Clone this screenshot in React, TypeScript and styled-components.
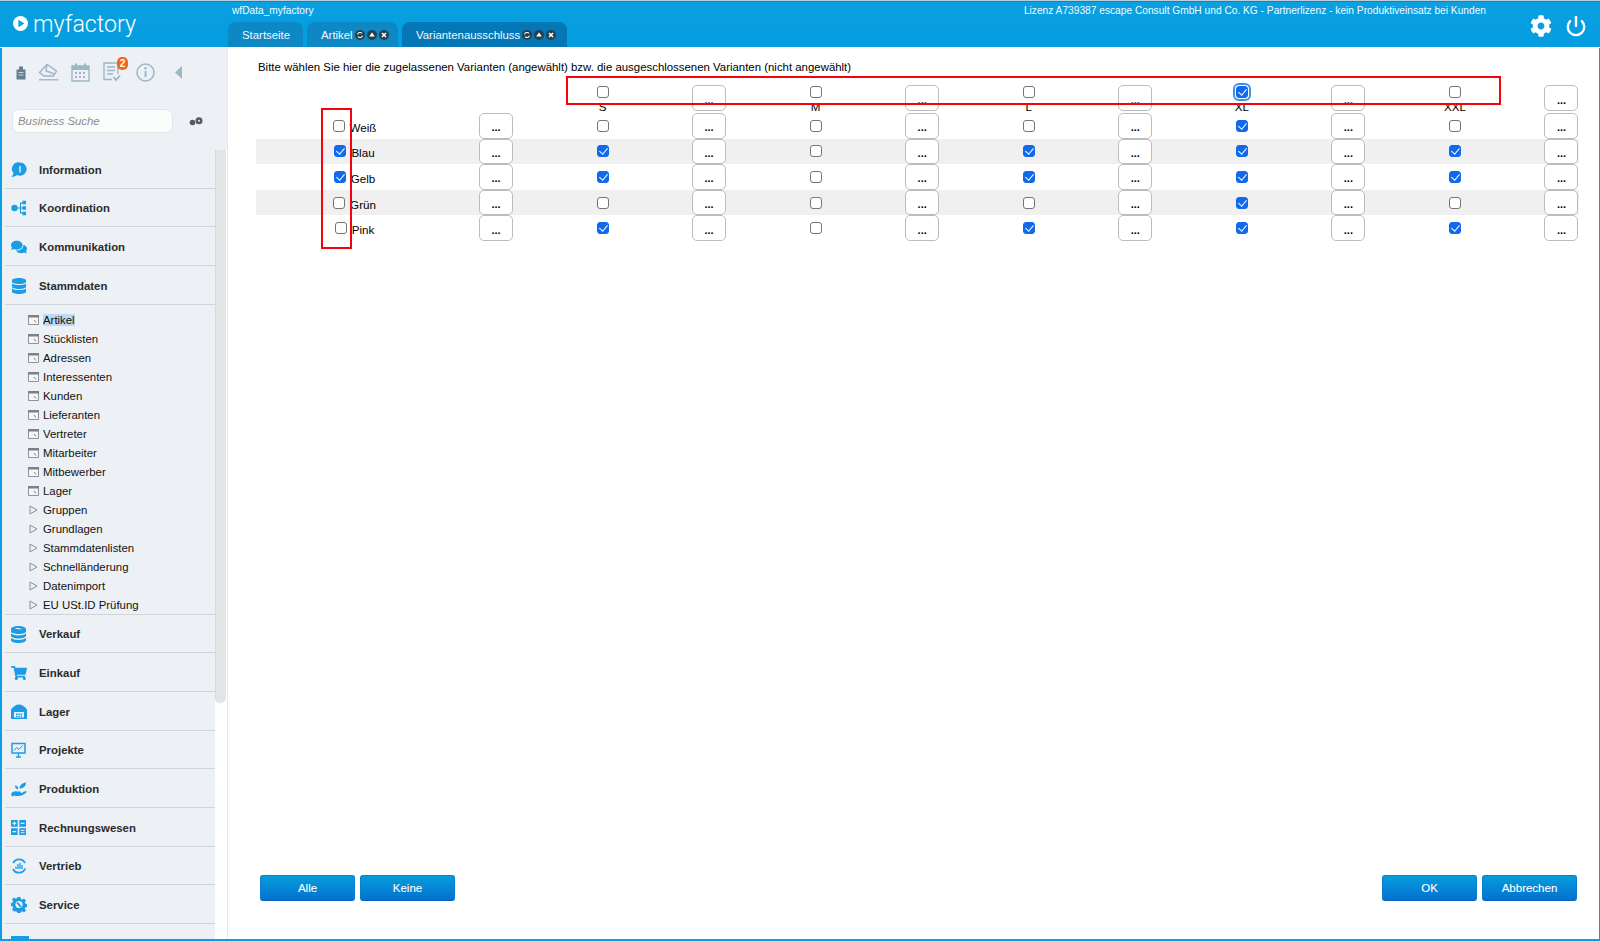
import React from "react";
import styled, { createGlobalStyle } from "styled-components";
import { FaCog, FaComments, FaDatabase, FaShoppingCart } from "react-icons/fa";
import { Power } from "lucide-react";

const GlobalStyle = createGlobalStyle`
  html, body { margin: 0; padding: 0; background: #fff; }
  body { font-family: "Liberation Sans", Arial, sans-serif; font-size: 12px; color: #000; }
  * { box-sizing: border-box; }
`;

const Page = styled.div`
  width: 1600px;
  height: 941px;
  display: flex;
  flex-direction: column;
  overflow: hidden;
`;

const Header = styled.header`
  height: 47px;
  flex: none;
  display: flex;
  padding-top: 2px;
  color: #fff;
  background: linear-gradient(#b9cfdb 0 1px, #3e7590 1px 2px, #0aa0e2 2px, #049ddf 100%);
`;

const Logo = styled.div`
  width: 228px;
  flex: none;
  display: flex;
  align-items: center;
  gap: 5px;
  padding: 0 0 2px 13px;
  font-family: Roboto, sans-serif;
  font-weight: 300;
  font-size: 23.2px;
`;

const HeaderMiddle = styled.div`
  flex: 1;
  display: flex;
  flex-direction: column;
`;

const InfoLine = styled.div`
  height: 20px;
  display: flex;
  justify-content: space-between;
  align-items: center;
  padding: 0 0 4px 4px;
  font-size: 10.2px;
  color: #f2fbff;
`;

const TabStrip = styled.nav`
  display: flex;
  gap: 4px;
  height: 25px;
`;

const Tab = styled.div<{ $active?: boolean; $width: number }>`
  width: ${(p) => p.$width}px;
  display: flex;
  align-items: center;
  gap: 2px;
  padding-left: 14px;
  font-size: 11.4px;
  border-radius: 8px 8px 0 0;
  color: #eef9ff;
  background: ${(p) => (p.$active ? "#0577b6" : "#0d88c4")};
`;

const TabGlyphs = styled.span`
  display: inline-flex;
  gap: 2px;
`;

const HeaderIcons = styled.div`
  width: 114px;
  flex: none;
  display: flex;
  align-items: center;
  gap: 13px;
  padding: 3px 0 0 44px;
`;

const Body = styled.div`
  flex: 1;
  display: flex;
  min-height: 0;
  margin-top: 1px;
  border-left: 2px solid #0a9fe2;
  border-right: 1px solid #0a9fe2;
  border-bottom: 2px solid #0a9fe2;
`;

const Sidebar = styled.aside`
  width: 226px;
  flex: none;
  display: flex;
  flex-direction: column;
  border-right: 1px solid #e3e9ee;
`;

const SideTop = styled.div`
  height: 102px;
  flex: none;
  background: #edf1f5;
  padding-top: 12px;
`;

const ToolRow = styled.div`
  height: 24px;
  display: flex;
  align-items: center;
  padding-left: 6px;
`;

const ToolSlot = styled.span<{ $width: number }>`
  position: relative;
  width: ${(p) => p.$width}px;
  display: flex;
  justify-content: center;
  color: #9ab8c6;
`;

const Badge = styled.span`
  position: absolute;
  top: -5px;
  left: 19px;
  width: 11px;
  height: 13px;
  border-radius: 5px;
  background: #f4661b;
  color: #fff;
  font-size: 10px;
  font-weight: 700;
  line-height: 13px;
  text-align: center;
`;

const SearchRow = styled.div`
  display: flex;
  align-items: center;
  gap: 16px;
  margin-top: 25px;
  padding-left: 10px;
`;

const SearchInput = styled.input`
  width: 161px;
  height: 24px;
  padding: 0 5px;
  border: 1px solid #e0e5e9;
  border-radius: 7px;
  background: #fbfcfc;
  font: italic 11.4px "Liberation Sans", Arial, sans-serif;
  outline: none;
  &::placeholder { color: #8d8d8d; opacity: 1; }
`;

const SideBody = styled.div`
  flex: 1;
  display: flex;
  min-height: 0;
`;

const Nav = styled.div`
  width: 213px;
  flex: none;
  overflow: hidden;
  background: #edf1f5;
`;

const Section = styled.div`
  height: 38.67px;
  margin-left: 3px;
  display: flex;
  align-items: center;
  border-bottom: 1px solid #cfd6db;
  padding: 2px 0 0 6px;
  font-size: 11.4px;
  font-weight: 700;
  color: #2b2b2b;
`;

const SectionIcon = styled.span`
  width: 28px;
  flex: none;
  display: flex;
  color: #1b9ce6;
`;

const SubList = styled.div`
  height: 310px;
  margin-left: 3px;
  padding: 6px 0 0 23px;
  border-bottom: 1px solid #cfd6db;
`;

const SubItem = styled.div`
  height: 19px;
  display: flex;
  align-items: center;
  gap: 4px;
  font-size: 11.4px;
  color: #111;
`;

const SubMark = styled.span`
  width: 11px;
  flex: none;
  display: flex;
  justify-content: center;
`;

const SubLabel = styled.span<{ $selected?: boolean }>`
  background: ${(p) => (p.$selected ? "#bcd9f6" : "transparent")};
`;

const ScrollTrack = styled.div`
  width: 11px;
  flex: none;
  background: #fff;
`;

const ScrollThumb = styled.div`
  height: 553px;
  border-radius: 0 0 5px 5px;
  background: #e4e5e6;
  box-shadow: inset 1px 0 1px #d9d9d9;
`;

const Main = styled.main`
  position: relative;
  flex: 1;
  display: flex;
  flex-direction: column;
  padding: 12px 22px 38px 28px;
`;

const Intro = styled.div`
  height: 15px;
  padding-left: 2px;
  line-height: 15px;
  font-size: 11.42px;
`;

const Matrix = styled.div`
  margin-top: 10px;
  width: 1323px;
`;

const Row = styled.div<{ $head?: boolean; $shaded?: boolean }>`
  display: grid;
  grid-template-columns: 223px 34px repeat(5, 179.1px 34px);
  grid-template-rows: ${(p) => (p.$head ? "26px" : "25.6px")};
  height: ${(p) => (p.$head ? "28px" : "25.6px")};
  background: ${(p) => (p.$shaded ? "#f0f0f0" : "transparent")};
`;

const NameCell = styled.label`
  display: flex;
  align-items: center;
  justify-content: center;
  gap: 5px;
  padding-right: 26px;
`;

const NameText = styled.span`
  position: relative;
  top: 1.5px;
  font-size: 11.6px;
`;

const CheckCell = styled.div`
  display: flex;
  align-items: center;
  justify-content: center;
`;

const HeadCell = styled.div`
  display: flex;
  flex-direction: column;
  align-items: center;
  padding-top: 1px;
  font-size: 11.6px;
  line-height: 13px;
  gap: 2px;
`;

const Box = styled.input<{ $focus?: boolean }>`
  appearance: none;
  position: relative;
  flex: none;
  width: 12px;
  height: 12px;
  margin: 0;
  border: 1px solid #757575;
  border-radius: 3px;
  background: #fff;
  ${(p) => (p.$focus ? "box-shadow: 0 0 0 1px #fff, 0 0 0 3px #3b93ee;" : "")}
  &:checked {
    border-color: #1169ee;
    background: #1169ee;
  }
  &:checked::after {
    content: "";
    position: absolute;
    left: 3px;
    top: 0;
    width: 3.5px;
    height: 7px;
    border: solid #fff;
    border-width: 0 1.8px 1.8px 0;
    transform: rotate(40deg);
  }
`;

const MoreButton = styled.button`
  width: 34px;
  height: 100%;
  padding: 3px 0 0;
  border: 1px solid #bcbcbc;
  border-radius: 5px;
  background: #fff;
  color: #000;
  font: 700 11px "Liberation Sans", Arial, sans-serif;
`;

const Footer = styled.footer`
  margin-top: auto;
  display: flex;
  justify-content: space-between;
  padding: 0 2px 0 4px;
`;

const ButtonGroup = styled.div`
  display: flex;
  gap: 5px;
`;

const ActionButton = styled.button`
  width: 95px;
  height: 26px;
  border: 1px solid #0a7ed0;
  border-bottom-color: #0562c4;
  border-radius: 3px;
  background: linear-gradient(#049ddb, #0571cf);
  color: #fff;
  font: 400 11.5px "Liberation Sans", Arial, sans-serif;
  -webkit-text-stroke: 0.1px #fff;
`;

const Marker = styled.div<{ $x: number; $y: number; $w: number; $h: number }>`
  position: absolute;
  left: ${(p) => p.$x}px;
  top: ${(p) => p.$y}px;
  width: ${(p) => p.$w}px;
  height: ${(p) => p.$h}px;
  border: 2px solid #f5020b;
  pointer-events: none;
`;

const PlayMark = () => (
  <svg width="15" height="15" viewBox="0 0 15 15">
    <circle cx="7.5" cy="7.5" r="7.5" fill="#fff" />
    <path d="M5.4 3.8 11.4 7.5 5.4 11.2Z" fill="#0aa0e2" />
  </svg>
);

const TabGlyph = ({ kind }: { kind: "reload" | "up" | "close" }) => (
  <svg width="10" height="10" viewBox="0 0 10 10">
    <circle cx="5" cy="5" r="5" fill="#24414f" />
    {kind === "reload" && <path d="M2.5 4.4A2.6 2.6 0 0 1 7 3.4M7.5 5.6A2.6 2.6 0 0 1 3 6.6" fill="none" stroke="#fff" strokeWidth="1.1" />}
    {kind === "up" && <path d="M5 2.6 7.8 6.6H2.2Z" fill="#fff" />}
    {kind === "close" && <path d="M3 3 7 7M7 3 3 7" stroke="#fff" strokeWidth="1.6" />}
  </svg>
);

const Glyphs = () => (
  <TabGlyphs>
    <TabGlyph kind="reload" />
    <TabGlyph kind="up" />
    <TabGlyph kind="close" />
  </TabGlyphs>
);

const ClipIcon = () => (
  <svg width="10" height="15" viewBox="0 0 10 15">
    <path d="M3 1.5h4v3h2.500v10H.5v-10H3z" fill="#64808e" />
    <path d="M2.500 7.500h5M2.500 10h5" stroke="#c9d6dd" />
  </svg>
);

const EraserIcon = () => (
  <svg width="21" height="18" viewBox="0 0 21 18" fill="none" stroke="currentColor" strokeWidth="1.4">
    <path d="M1 16.800h19.500" />
    <path d="M1.500 9.500 9 1.500l9.500 6.500-3 5H6z" />
    <path d="M9 1.500 8 8l8.500 3" />
  </svg>
);

const CalendarIcon = () => (
  <svg width="19" height="19" viewBox="0 0 19 19" fill="currentColor">
    <path d="M1 3h17v15H1z" fill="none" stroke="currentColor" strokeWidth="1.400" />
    <path d="M1 3h17v4H1zM4 0.500h2v4H4zM13 0.500h2v4h-2z" />
    <path d="M4 9h2v2H4zM8 9h2v2H8zM12 9h2v2h-2zM4 13h2v2H4zM8 13h2v2H8zM12 13h2v2h-2z" />
  </svg>
);

const ListIcon = () => (
  <svg width="18" height="20" viewBox="0 0 18 20" fill="none" stroke="currentColor" strokeWidth="1.400">
    <path d="M9 17.500H1V1h14v11" />
    <path d="M4 5h8M4 8.500h8M4 12h6" />
    <path d="m10.500 15 2.500 3 4-4.500" strokeWidth="1.800" />
  </svg>
);

const InfoIcon = () => (
  <svg width="19" height="19" viewBox="0 0 19 19" fill="none" stroke="currentColor">
    <circle cx="9.500" cy="9.500" r="8.500" strokeWidth="1.500" />
    <path d="M9.500 8v6" strokeWidth="2" />
    <circle cx="9.500" cy="5.300" r="1.200" fill="currentColor" stroke="none" />
  </svg>
);

const Collapse = () => (
  <svg width="7" height="13" viewBox="0 0 7 13">
    <path d="M7 0v13L0 6.500Z" fill="currentColor" />
  </svg>
);

const SearchGears = () => (
  <svg width="14" height="9" viewBox="0 0 14 9" fill="#525b60">
    <circle cx="3.500" cy="5.500" r="2.800" />
    <circle cx="10" cy="3.800" r="3.500" />
    <circle cx="10" cy="3.800" r="1" fill="#edf1f5" />
  </svg>
);

const InfoBubble = () => (
  <svg width="16" height="16" viewBox="0 0 16 16">
    <path d="M9 .5a6.600 6.600 0 1 1-2.700 12.600C4.500 14.600 2.500 15 0 14.800c1.300-.9 2.200-2 2.500-3.600A6.600 6.600 0 0 1 9 .5Z" fill="currentColor" />
    <path d="M9 4v6.500" stroke="#d8eefb" strokeWidth="1.500" />
  </svg>
);

const FlowIcon = () => (
  <svg width="16" height="16" viewBox="0 0 16 16" fill="currentColor">
    <circle cx="3.500" cy="8" r="3.200" />
    <path d="M6 7.400h3V2.500h3v1.200h-2v3.700h2v1.200h-2v3.700h2v1.200H9V8.600H6z" />
    <path d="M11.500.8h3.500v3.500h-3.500zM11.500 6.200h3.500v3.500h-3.500zM11.500 11.700h3.500v3.500h-3.500z" />
  </svg>
);

const CoinStack = () => (
  <svg width="15" height="17" viewBox="0 0 15 17" fill="currentColor">
    <path d="M0 12c1.500 1.300 4.500 2 7.500 2s6-.7 7.500-2v2.200c0 1.500-3.400 2.800-7.500 2.800S0 15.700 0 14.200z" />
    <path d="M0 7.500c1.500 1.300 4.500 2 7.500 2s6-.7 7.500-2v2.200c0 1.500-3.400 2.800-7.500 2.800S0 11.200 0 9.700z" />
    <path fillRule="evenodd" d="M7.500 0C11.600 0 15 1.300 15 3.200v2C15 7 11.600 8 7.500 8S0 7 0 5.200v-2C0 1.300 3.400 0 7.500 0ZM4 2.500c1 1 6 .2 7.500 1.500-1.500-2-5.500-2.500-7.500-1.500Z" />
  </svg>
);

const DepotIcon = () => (
  <svg width="16" height="15" viewBox="0 0 16 15" fill="currentColor">
    <path fillRule="evenodd" d="M0 5.500C2 2.500 5 .5 8 .5s6 2 8 5V15H0zM3 8v5.500h10V8zM5 9.500h1.500V11H5zM7.300 9.500h1.500V11H7.300zM9.600 9.500h1.500V11H9.600zM5 11.800h1.500v1.200H5zM7.300 11.800h1.500v1.200H7.300zM9.600 11.800h1.500v1.200H9.600z" />
  </svg>
);

const BoardIcon = () => (
  <svg width="15" height="16" viewBox="0 0 15 16" fill="none" stroke="currentColor">
    <path d="M1 1.500h13v9.500H1z" strokeWidth="1.500" />
    <path d="m3 8.500 2.500-3 2.500 2 3.500-4" strokeWidth="1" />
    <path d="M7.500 11v4M5 15h5" strokeWidth="1.300" />
  </svg>
);

const SproutIcon = () => (
  <svg width="16" height="16" viewBox="0 0 16 16" fill="currentColor">
    <path d="M0 12.500c2-2 4-2.500 6-2h3c1.200.200 1.200 1.700 0 1.800H6.500l4-.4 3.500-1.700c1.300-.4 2 .8 1 1.600-2 1.700-4.500 3.200-7.500 3.200-2 0-3.500-.5-4.500-.2L1 15.500z" />
    <path d="M7 8.500C5 8 4 6.500 4 4.500c2 0 3.500 1.500 3 4ZM8.500 7.500C8.500 4.500 11 2 15 1.500c0 3.500-2.500 6-6.500 6Z" />
  </svg>
);

const LedgerIcon = () => (
  <svg width="15" height="15" viewBox="0 0 15 15" fill="currentColor">
    <path fillRule="evenodd" d="M0 0h6.700v6.700H0zM8.300 0H15v6.700H8.300zM0 8.300h6.700V15H0zM8.300 8.300H15V15H8.300zM2.800 1.500v1.300H1.500v1.100h1.300v1.300h1.100V3.900h1.300V2.800H3.900V1.500zM9.800 2.800v1.100h3.700V2.800zM1.500 11.100v1.100h3.700v-1.100zM9.800 10v1.100h3.700V10zM9.800 12.200v1.100h3.700v-1.100z" />
  </svg>
);

const CycleIcon = () => (
  <svg width="16" height="16" viewBox="0 0 16 16" fill="none" stroke="currentColor">
    <path d="M2.200 5A6.700 6.700 0 0 1 14 5M14.200 10.500A6.700 6.700 0 0 1 2 11" strokeWidth="1.800" />
    <path d="M5 11V8.500M7 11V6M9 11V5M11 11V7" strokeWidth="1.300" />
  </svg>
);

const ServiceIcon = () => (
  <svg width="16" height="16" viewBox="0 0 16 16">
    <path d="M6.600 0h2.800l.4 2.100 1.400.6 1.800-1.200 2 2-1.200 1.800.6 1.400 2.100.4v2.800l-2.100.4-.6 1.400 1.200 1.800-2 2-1.800-1.200-1.400.6-.4 2.100H6.600l-.4-2.100-1.400-.6L3 14.500l-2-2 1.200-1.800-.6-1.400L-.5 8.900V6.100l2.100-.4.600-1.400L1 2.500l2-2 1.800 1.200 1.400-.6z" fill="currentColor" />
    <circle cx="8" cy="7.500" r="3.600" fill="#edf1f5" />
    <path d="M6 5.500 10 9.800" stroke="currentColor" strokeWidth="1.800" />
  </svg>
);

const CutOffIcon = () => (
  <svg width="18" height="16" viewBox="0 0 18 16">
    <path d="M0 0h18v16H0z" fill="currentColor" />
  </svg>
);

const WindowMark = () => (
  <svg width="11" height="10" viewBox="0 0 11 10">
    <path d="M.5.5h10v9H.5z" fill="#f4f6f7" stroke="#8d9398" />
    <path d="M0 0h11v2.500H0z" fill="#7b8186" />
    <path d="m6 5 2 2.500" stroke="#7b8186" />
  </svg>
);

const ArrowMark = () => (
  <svg width="9" height="10" viewBox="0 0 9 10">
    <path d="M1 1 8 5 1 9Z" fill="none" stroke="#8a8f93" />
  </svg>
);

const sectionsTop = [
  { label: "Information", icon: <InfoBubble /> },
  { label: "Koordination", icon: <FlowIcon /> },
  { label: "Kommunikation", icon: <FaComments size={16} /> },
  { label: "Stammdaten", icon: <FaDatabase size={16} /> },
];

const sectionsBottom = [
  { label: "Verkauf", icon: <CoinStack /> },
  { label: "Einkauf", icon: <FaShoppingCart size={16} /> },
  { label: "Lager", icon: <DepotIcon /> },
  { label: "Projekte", icon: <BoardIcon /> },
  { label: "Produktion", icon: <SproutIcon /> },
  { label: "Rechnungswesen", icon: <LedgerIcon /> },
  { label: "Vertrieb", icon: <CycleIcon /> },
  { label: "Service", icon: <ServiceIcon /> },
  { label: "", icon: <CutOffIcon /> },
];

const pages = ["Artikel", "Stücklisten", "Adressen", "Interessenten", "Kunden", "Lieferanten", "Vertreter", "Mitarbeiter", "Mitbewerber", "Lager"];
const folders = ["Gruppen", "Grundlagen", "Stammdatenlisten", "Schnelländerung", "Datenimport", "EU USt.ID Prüfung"];

const sizes = [
  { name: "S", checked: false },
  { name: "M", checked: false },
  { name: "L", checked: false },
  { name: "XL", checked: true, focus: true },
  { name: "XXL", checked: false },
];

const colours = [
  { name: "Weiß", checked: false, cells: [false, false, false, true, false] },
  { name: "Blau", checked: true, cells: [true, false, true, true, true] },
  { name: "Gelb", checked: true, cells: [true, false, true, true, true] },
  { name: "Grün", checked: false, cells: [false, false, false, true, false] },
  { name: "Pink", checked: false, cells: [true, false, true, true, true] },
];

const More = () => <MoreButton type="button">...</MoreButton>;

const App = () => (
  <Page>
    <GlobalStyle />
    <Header>
      <Logo>
        <PlayMark />
        myfactory
      </Logo>
      <HeaderMiddle>
        <InfoLine>
          <span>wfData_myfactory</span>
          <span>Lizenz A739387 escape Consult GmbH und Co. KG - Partnerlizenz - kein Produktiveinsatz bei Kunden</span>
        </InfoLine>
        <TabStrip>
          <Tab $width={75}>Startseite</Tab>
          <Tab $width={91}>
            Artikel
            <Glyphs />
          </Tab>
          <Tab $width={165} $active>
            Variantenausschluss
            <Glyphs />
          </Tab>
        </TabStrip>
      </HeaderMiddle>
      <HeaderIcons>
        <FaCog size={22} />
        <Power size={22} strokeWidth={2.6} />
      </HeaderIcons>
    </Header>
    <Body>
      <Sidebar>
        <SideTop>
          <ToolRow>
            <ToolSlot $width={26}><ClipIcon /></ToolSlot>
            <ToolSlot $width={28}><EraserIcon /></ToolSlot>
            <ToolSlot $width={36}><CalendarIcon /></ToolSlot>
            <ToolSlot $width={28}>
              <ListIcon />
              <Badge>2</Badge>
            </ToolSlot>
            <ToolSlot $width={38}><InfoIcon /></ToolSlot>
            <ToolSlot $width={28}><Collapse /></ToolSlot>
          </ToolRow>
          <SearchRow>
            <SearchInput placeholder="Business Suche" readOnly />
            <SearchGears />
          </SearchRow>
        </SideTop>
        <SideBody>
          <Nav>
            {sectionsTop.map((s) => (
              <Section key={s.label}>
                <SectionIcon>{s.icon}</SectionIcon>
                {s.label}
              </Section>
            ))}
            <SubList>
              {pages.map((p) => (
                <SubItem key={p}>
                  <SubMark><WindowMark /></SubMark>
                  <SubLabel $selected={p === "Artikel"}>{p}</SubLabel>
                </SubItem>
              ))}
              {folders.map((f) => (
                <SubItem key={f}>
                  <SubMark><ArrowMark /></SubMark>
                  <SubLabel>{f}</SubLabel>
                </SubItem>
              ))}
            </SubList>
            {sectionsBottom.map((s, i) => (
              <Section key={i}>
                <SectionIcon>{s.icon}</SectionIcon>
                {s.label}
              </Section>
            ))}
          </Nav>
          <ScrollTrack>
            <ScrollThumb />
          </ScrollTrack>
        </SideBody>
      </Sidebar>
      <Main>
        <Intro>Bitte wählen Sie hier die zugelassenen Varianten (angewählt) bzw. die ausgeschlossenen Varianten (nicht angewählt)</Intro>
        <Matrix>
          <Row $head>
            <span />
            <span />
            {sizes.map((s) => (
              <React.Fragment key={s.name}>
                <HeadCell>
                  <Box type="checkbox" defaultChecked={s.checked} $focus={s.focus} />
                  <span>{s.name}</span>
                </HeadCell>
                <More />
              </React.Fragment>
            ))}
          </Row>
          {colours.map((c, i) => (
            <Row key={c.name} $shaded={i % 2 === 1}>
              <NameCell>
                <Box type="checkbox" defaultChecked={c.checked} />
                <NameText>{c.name}</NameText>
              </NameCell>
              <More />
              {c.cells.map((on, j) => (
                <React.Fragment key={j}>
                  <CheckCell>
                    <Box type="checkbox" defaultChecked={on} />
                  </CheckCell>
                  <More />
                </React.Fragment>
              ))}
            </Row>
          ))}
        </Matrix>
        <Footer>
          <ButtonGroup>
            <ActionButton type="button">Alle</ActionButton>
            <ActionButton type="button">Keine</ActionButton>
          </ButtonGroup>
          <ButtonGroup>
            <ActionButton type="button">OK</ActionButton>
            <ActionButton type="button">Abbrechen</ActionButton>
          </ButtonGroup>
        </Footer>
        <Marker $x={338} $y={28} $w={935} $h={29} />
        <Marker $x={93} $y={60} $w={31} $h={141} />
      </Main>
    </Body>
  </Page>
);

export default App;
